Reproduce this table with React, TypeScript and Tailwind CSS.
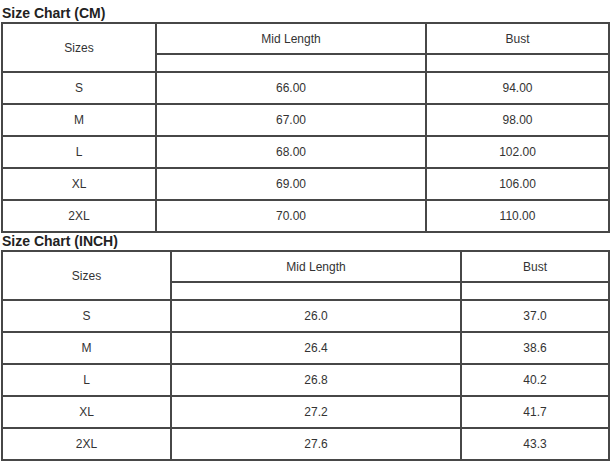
const cm = {
  title: "Size Chart (CM)",
  cols: [154, 270, 183],
  rows: [
    ["S", "66.00", "94.00"],
    ["M", "67.00", "98.00"],
    ["L", "68.00", "102.00"],
    ["XL", "69.00", "106.00"],
    ["2XL", "70.00", "110.00"],
  ],
};

const inch = {
  title: "Size Chart (INCH)",
  cols: [169, 290, 148],
  rows: [
    ["S", "26.0", "37.0"],
    ["M", "26.4", "38.6"],
    ["L", "26.8", "40.2"],
    ["XL", "27.2", "41.7"],
    ["2XL", "27.6", "43.3"],
  ],
};

const cell = "border-2 border-[#474747] p-0 text-center align-middle";

function SizeTable({ data }: { data: typeof cm }) {
  return (
    <div>
      <h3 className="pl-[2px] text-[14px] font-bold leading-[17px] text-[#222]">{data.title}</h3>
      <table className="ml-[1px] w-[608px] table-fixed border-collapse text-[12px] text-[#333]">
        <colgroup>
          {data.cols.map((w, i) => (
            <col key={i} style={{ width: w }} />
          ))}
        </colgroup>
        <tbody>
          <tr className="h-[31px]">
            <td rowSpan={2} className={cell}>
              Sizes
            </td>
            <td className={cell}>Mid Length</td>
            <td className={cell}>Bust</td>
          </tr>
          <tr className="h-[18px]">
            <td className={cell}></td>
            <td className={cell}></td>
          </tr>
          {data.rows.map((r) => (
            <tr key={r[0]} className="h-[32px]">
              {r.map((v, i) => (
                <td key={i} className={cell}>
                  {v}
                </td>
              ))}
            </tr>
          ))}
        </tbody>
      </table>
    </div>
  );
}

export default function App() {
  return (
    <div className="w-[612px] h-[462px] overflow-hidden bg-white pt-[5px] font-['Liberation_Sans',Arial,sans-serif]">
      <SizeTable data={cm} />
      <SizeTable data={inch} />
    </div>
  );
}
